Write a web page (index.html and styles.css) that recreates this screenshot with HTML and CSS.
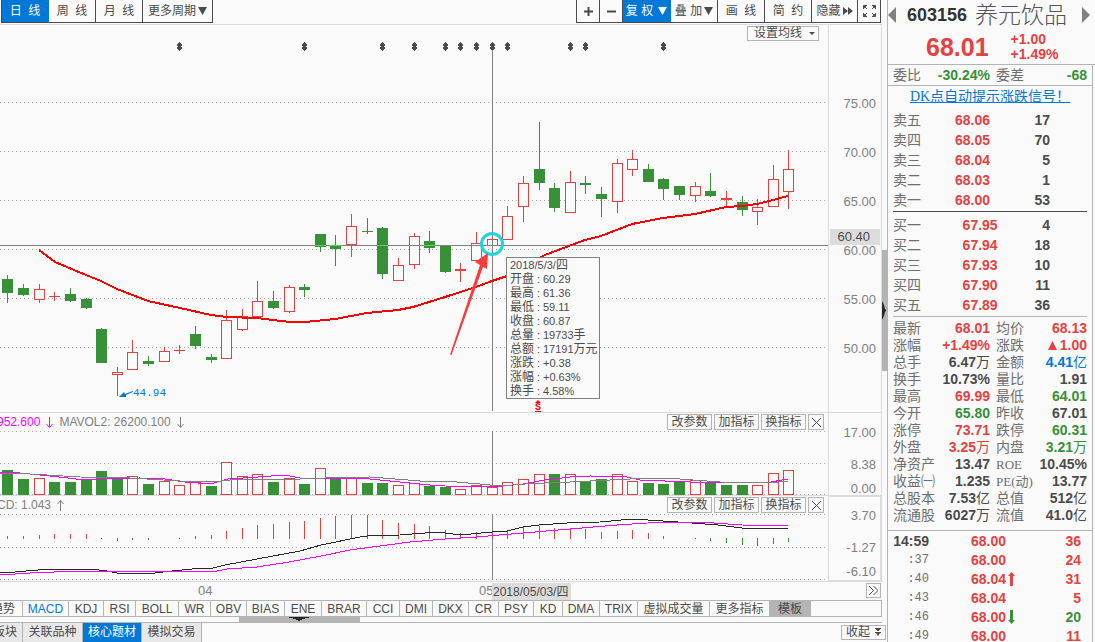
FILE: index.html
```html
<!DOCTYPE html>
<html lang="zh-CN">
<head>
<meta charset="utf-8">
<title>603156 养元饮品</title>
<link rel="stylesheet" href="styles.css">
</head>
<body>
<main class="main">
  <nav class="toolbar">
    <div class="group">
      <button class="tool on">日&nbsp;&nbsp;线</button>
      <button class="tool">周&nbsp;&nbsp;线</button>
      <button class="tool">月&nbsp;&nbsp;线</button>
      <button class="tool wide">更多周期<svg class="tri" width="9" height="8"><path d="M0 0h9l-4.500 8z"/></svg></button>
    </div>
    <div class="group">
      <button class="tool small" aria-label="放大"><svg width="9" height="9"><path d="M0 3.500h3.500V0h2v3.500H9v2H5.500V9h-2V5.500H0z"/></svg></button>
      <button class="tool small" aria-label="缩小"><svg width="9" height="9"><path d="M0 3.500h9v2H0z"/></svg></button>
      <button class="tool on adj">复&nbsp;权<svg class="tri gap" width="9" height="8"><path d="M0 0h9l-4.500 8z"/></svg></button>
      <button class="tool">叠&nbsp;加<svg class="tri" width="9" height="8"><path d="M0 0h9l-4.500 8z"/></svg></button>
      <button class="tool">画&nbsp;&nbsp;线</button>
      <button class="tool">简&nbsp;&nbsp;约</button>
      <button class="tool hide">隐藏<svg class="tri" width="10" height="8"><path d="M0 0l5 4-5 4zM5 0l5 4-5 4z"/></svg></button>
      <button class="tool small" aria-label="全屏"><svg width="13" height="12" fill="none" stroke="#4b4b4b"><path d="M.5 4V.5H4M1 1l3 3M9 .5h3.500V4M12 1L9 4M.5 8v3.500H4M1 11l3-3M9 11.500h3.500V8M12 11L9 8"/></svg></button>
    </div>
  </nav>

  <section class="panel price">
    <div class="plot">
      <header class="head right"><button class="avg">设置均线<svg width="6" height="3"><path d="M0 0h6L3 3z"/></svg></button></header>
      <svg class="canvas tall" shape-rendering="crispEdges">
        <defs><path id="mark" d="M2 0h1v1h1v1h1v2H4v1h1v2H4v1H3v1H2V8H1V7H0V5h1V4H0V2h1V1h1z"/></defs>
        <g transform="translate(0 -41)">
          <g class="grid">
            <line x1="0" x2="100%" y1="102.500" y2="102.500"/><line x1="0" x2="100%" y1="151.500" y2="151.500"/><line x1="0" x2="100%" y1="200.500" y2="200.500"/>
            <line x1="0" x2="100%" y1="249.500" y2="249.500"/><line x1="0" x2="100%" y1="298.500" y2="298.500"/><line x1="0" x2="100%" y1="347.500" y2="347.500"/>
          </g>
          <g class="ink">
            <use href="#mark" x="177" y="42"/><use href="#mark" x="302" y="42"/><use href="#mark" x="380" y="42"/><use href="#mark" x="412" y="42"/>
            <use href="#mark" x="443" y="42"/><use href="#mark" x="458" y="42"/><use href="#mark" x="474" y="42"/><use href="#mark" x="490" y="42"/>
            <use href="#mark" x="505" y="42"/><use href="#mark" x="568" y="42"/><use href="#mark" x="583" y="42"/><use href="#mark" x="661" y="42"/>
          </g>
          <path class="down" d="M7.500 275V303M23.500 284V296M70.500 288V302M86.500 298V309M101.500 328V363M148.500 356V366M195.500 326V349M211.500 354V363M273.500 291V309M304.500 284V297M320.500 234V252M335.500 235V266M367.500 218V234M382.500 227V279M429.500 231V253M445.500 246V273M539.500 122V190M554.500 183V212M585.500 176V194M601.500 187V217M648.500 164V182M663.500 178V200M679.500 186V200M710.500 173V197M742.500 196V216"/>
          <path class="down body" d="M7.500 279V293M23.500 288V295M70.500 294V301M86.500 299V308M101.500 329V363M148.500 361V364M195.500 334V346M211.500 357V360M273.500 301V308M304.500 287V290M320.500 234V247M335.500 245V249M367.500 231V232M382.500 228V274M429.500 241V248M445.500 246V272M539.500 169V183M554.500 188V208M585.500 183V185M601.500 194V199M648.500 169V182M663.500 179V189M679.500 186V195M710.500 191V196M742.500 202V210"/>
          <path class="up" d="M39.500 284V303M54.500 292V301M117.500 367V396M132.500 340V352M164.500 347V351M179.500 345V354M226.500 310V320M242.500 309V331M257.500 281V301M289.500 285V313M351.500 214V257M398.500 258V265M414.500 233V269M460.500 263V282M476.500 232V243M492.500 230V256M507.500 206V216M523.500 176V222M570.500 171V182M617.500 159V213M632.500 150V176M695.500 182V202M726.500 191V207M757.500 199V225M773.500 165V179M788.500 150V209M49 296.500h11M174 350.500h11M455 269.500h11M455 270.500h11M721 198.500h11M721 199.500h11"/>
          <path class="up hollow" d="M34.500 289.500h10v10h-10zM112.500 372.500h10v2h-10zM127.500 352.500h10v17h-10zM159.500 351.500h10v10h-10zM221.500 320.500h10v38h-10zM237.500 316.500h10v13h-10zM252.500 301.500h10v15h-10zM284.500 287.500h10v24h-10zM346.500 226.500h10v18h-10zM393.500 265.500h10v15h-10zM409.500 236.500h10v28h-10zM471.500 243.500h10v17h-10zM487.500 239.500h10v6h-10zM502.500 216.500h10v23h-10zM518.500 183.500h10v23h-10zM565.500 182.500h10v30h-10zM612.500 163.500h10v38h-10zM627.500 159.500h10v10h-10zM690.500 186.500h10v9h-10zM752.500 207.500h10v4h-10zM768.500 179.500h10v27h-10zM783.500 169.500h10v22h-10z"/>
          <line class="cross" x1="0" x2="100%" y1="245.500" y2="245.500"/><path class="cross" d="M492.500 50V411"/>
          <path class="glow" d="M315 245.500h11M330 245.500h11M377 245.500h11M424 245.500h11"/>
          <polyline class="ma" points="39,250 55,262 86,275 101,281 117,289 148,301 180,308 211,315 227,317 257,318 273,320 290,322 305,322 335,319 367,313 398,310 413,307 445,297 476,287 492,281 507,276 545,255 585,240 601,236 632,224 663,218 695,214 726,207 742,206 757,204 773,200 788,196"/>
          <g shape-rendering="auto">
            <circle cx="492" cy="244" r="10.500" class="ring"/>
            <path class="pointer" d="M450 354.500L480 265l-5-3L488 253l-1 16-4-2L451.500 355z"/>
            <path d="M119 397l5-5 1 2 8-3v1l-7 3v2z" fill="#0078d7"/>
            <text class="low" x="133" y="396">44.94</text>
            <path d="M535 403l3-3 3 3z" fill="red"/><text class="sell" x="535" y="410">S</text>
          </g>
        </g>
      </svg>
      <dl class="tip">
        <div class="day">2018/5/3/<b>四</b></div>
        <div><dt>开盘</dt><dd>60.29</dd></div>
        <div><dt>最高</dt><dd>61.36</dd></div>
        <div><dt>最低</dt><dd>59.11</dd></div>
        <div><dt>收盘</dt><dd>60.87</dd></div>
        <div><dt>总量</dt><dd>19733<b>手</b></dd></div>
        <div><dt>总额</dt><dd>17191<b>万元</b></dd></div>
        <div><dt>涨跌</dt><dd>+0.38</dd></div>
        <div><dt>涨幅</dt><dd>+0.63%</dd></div>
        <div><dt>换手</dt><dd>4.58%</dd></div>
      </dl>
    </div>
    <div class="axis"><span>75.00</span><span>70.00</span><span>65.00</span><span>60.00</span><span>55.00</span><span>50.00</span><em class="now">60.40</em></div>
  </section>

  <section class="panel">
    <div class="plot">
      <header class="head">
        <span class="legend pink">952.600<svg width="7" height="11"><path d="M3.500 0V10M.5 7l3 3.500 3-3.500"/></svg></span>
        <span class="legend next">MAVOL2: 26200.100<svg width="7" height="11"><path d="M3.500 0V10M.5 7l3 3.500 3-3.500"/></svg></span>
        <span class="acts"><button>改参数</button><button>加指标</button><button>换指标</button><button class="x" aria-label="关闭"><svg width="9" height="9"><path d="M0 0l9 9M9 0L0 9"/></svg></button></span>
      </header>
      <svg class="canvas vol" shape-rendering="crispEdges">
        <g transform="translate(0 -431)">
          <g class="grid"><line x1="0" x2="100%" y1="431.500" y2="431.500"/><line x1="0" x2="100%" y1="463.500" y2="463.500"/><line x1="0" x2="100%" y1="494.500" y2="494.500"/></g>
          <path class="cross" d="M492.500 431V495"/>
          <path class="down body" d="M7.500 470V495M23.500 479V495M54.500 482V495M70.500 482V495M86.500 480V495M101.500 471V495M117.500 479V495M148.500 484V495M211.500 486V495M273.500 482V495M304.500 484V495M335.500 479V495M367.500 483V495M382.500 483V495M429.500 486V495M445.500 487V495M554.500 474V495M585.500 481V495M601.500 479V495M648.500 483V495M663.500 484V495M679.500 482V495M710.500 483V495M726.500 485V495M742.500 485V495"/>
          <path class="up hollow" d="M34.500 494.500v-16h10v16zM127.500 494.500v-18h10v18zM159.500 494.500v-13h10v13zM174.500 494.500v-9h10v9zM190.500 494.500v-12h10v12zM221.500 494.500v-32h10v32zM237.500 494.500v-18h10v18zM252.500 494.500v-20h10v20zM284.500 494.500v-16h10v16zM315.500 494.500v-26h10v26zM346.500 494.500v-16h10v16zM393.500 494.500v-9h10v9zM409.500 494.500v-11h10v11zM455.500 494.500v-5h10v5zM471.500 494.500v-9h10v9zM487.500 494.500v-7h10v7zM502.500 494.500v-12h10v12zM518.500 494.500v-15h10v15zM534.500 494.500v-20h10v20zM565.500 494.500v-20h10v20zM612.500 494.500v-20h10v20zM627.500 494.500v-13h10v13zM690.500 494.500v-14h10v14zM752.500 494.500v-9h10v9zM768.500 494.500v-21h10v21zM783.500 494.500v-24h10v24z"/>
          <polyline class="line pinkline" points="0,472 20,473 50,476 85,480 105,479 140,478 165,479 185,482 210,484 228,479 258,477 285,475 305,479 317,478 360,478 380,480 400,482 430,485 445,486 492,487 523,484 545,480 570,477 590,476 627,477 640,480 690,482 765,483 788,479"/>
          <polyline class="line greyline" points="0,473 30,474 80,477 130,478 180,481 213,482 238,479 300,479 325,478 370,477 420,481 445,481 480,484 500,486 525,484 545,483 570,482 610,480 650,478 680,479 720,482 770,483 788,481"/>
        </g>
      </svg>
    </div>
    <div class="axis short"><span>17.00</span><span>8.38</span><span>0.00</span></div>
  </section>

  <section class="panel">
    <div class="plot">
      <header class="head">
        <span class="legend">CD: 1.043<svg width="7" height="11"><path d="M3.500 1V11M.5 4l3-3.500 3 3.500"/></svg></span>
        <span class="acts"><button>改参数</button><button>加指标</button><button>换指标</button><button class="x" aria-label="关闭"><svg width="9" height="9"><path d="M0 0l9 9M9 0L0 9"/></svg></button></span>
      </header>
      <svg class="canvas macd" shape-rendering="crispEdges">
        <g transform="translate(0 -514)">
          <g class="grid"><line x1="0" x2="100%" y1="514.500" y2="514.500"/><line x1="0" x2="100%" y1="547.500" y2="547.500"/><line x1="0" x2="100%" y1="579.500" y2="579.500"/></g>
          <path class="cross" d="M492.500 514V580"/>
          <path class="up" d="M7.500 536V539M23.500 536V539M39.500 535V539M54.500 534V539M70.500 534V539M86.500 534V539M101.500 538V539M179.500 538V539M195.500 536V539M211.500 535V539M226.500 531V539M242.500 528V539M257.500 525V539M273.500 524V539M289.500 522V539M304.500 521V539M320.500 518V539M335.500 516V539M351.500 515V539M367.500 515V539M382.500 520V539M398.500 523V539M414.500 524V539M429.500 526V539M445.500 530V539M460.500 533V539M476.500 532V539M492.500 531V539M507.500 531V539M523.500 527V539M539.500 526V539M554.500 528V539M570.500 529V539M585.500 529V539M601.500 532V539M617.500 531V539M632.500 530V539M648.500 533V539M663.500 536V539"/>
          <path class="down" d="M117.500 538V541M132.500 538V540M148.500 538V540M695.500 538V539M710.500 538V541M726.500 538V543M742.500 538V545M757.500 538V546M773.500 538V544M788.500 538V542"/>
          <polyline class="line black" points="0,573 15,572 38,570 63,569 90,569 107,571 117,573 155,573 172,571 192,569 213,568 225,565 257,559 300,551 321,545 360,537 367,536 400,535 425,533 433,532 445,533 460,535 492,532 507,531 523,527 539,525 567,523 600,522 632,519 663,521 692,523 718,525 742,528 788,528"/>
          <polyline class="line pinkline" points="0,575 15,574 30,573 78,571 109,571 185,571 217,571 227,569 257,567 289,562 321,556 350,550 380,546 410,542 445,539 476,537 523,533 570,529 617,525 663,522 700,522 742,525 788,526"/>
        </g>
      </svg>
    </div>
    <div class="axis short boxed"><span>3.70</span><span>-1.27</span><span>-6.10</span></div>
  </section>

  <div class="dates">
    <span class="month apr">04</span><span class="month may">05</span><span class="cursor">2018/05/03/<b>四</b></span>
    <button class="more" aria-label="更多"><svg width="9" height="9"><path d="M0 0l4.500 4.500L0 9M4.500 0L9 4.500 4.500 9"/></svg></button>
  </div>

  <nav class="tabs">
    <button class="cut">趋势</button><button class="sel">MACD</button><button>KDJ</button><button>RSI</button><button>BOLL</button><button>WR</button><button>OBV</button><button>BIAS</button><button>ENE</button><button>BRAR</button><button>CCI</button><button>DMI</button><button>DKX</button><button>CR</button><button>PSY</button><button>KD</button><button>DMA</button><button>TRIX</button><button>虚拟成交量</button><button>更多指标</button><button class="tpl">模板</button>
  </nav>
  <div class="strip"><div class="thumb"><svg width="20" height="4"><path d="M0 0h20v1h-4v1h-3v1h-2v1H9V3H7V2H4V1H0z"/></svg></div></div>
  <footer class="foot">
    <button class="cut">板块</button><button>关联品种</button><button class="sel">核心题材</button><button>模拟交易</button>
    <button class="fold">收起<svg width="6" height="8"><path d="M0 0h6v1H5v1H4v1H2V2H1V1H0zM0 4h6v1H5L3 8 1 5H0z"/></svg></button>
  </footer>
</main>

<div class="gutter"><div class="grip"><svg width="4" height="19"><path d="M0 0l1 2 1 2 1 4 1 1v1l-1 1-1 4-1 2-1 2z"/></svg></div></div>

<aside class="side">
  <header class="stock">
    <div class="title"><svg width="8" height="16"><path d="M8 0v16L0 8z"/></svg><strong>603156</strong><h1>养元饮品</h1><svg width="8" height="16"><path d="M0 0v16l8-8z"/></svg></div>
    <div class="quote"><strong>68.01</strong><div>+1.00<br>+1.49%</div></div>
  </header>
  <div class="book">
    <div class="pair ratio"><span>委比</span><b class="g">-30.24%</b><span>委差</span><b class="g">-68</b></div>
    <a class="dk" href="#">DK点自动提示涨跌信号！</a>
    <table class="orders sells">
      <tr><th>卖五</th><td class="r">68.06</td><td>17</td></tr>
      <tr><th>卖四</th><td class="r">68.05</td><td>70</td></tr>
      <tr><th>卖三</th><td class="r">68.04</td><td>5</td></tr>
      <tr><th>卖二</th><td class="r">68.03</td><td>1</td></tr>
      <tr><th>卖一</th><td class="r">68.00</td><td>53</td></tr>
    </table>
    <table class="orders buys">
      <tr><th>买一</th><td class="r">67.95</td><td>4</td></tr>
      <tr><th>买二</th><td class="r">67.94</td><td>18</td></tr>
      <tr><th>买三</th><td class="r">67.93</td><td>10</td></tr>
      <tr><th>买四</th><td class="r">67.90</td><td>11</td></tr>
      <tr><th>买五</th><td class="r">67.89</td><td>36</td></tr>
    </table>
    <div class="stats">
      <div class="pair"><span>最新</span><b class="r">68.01</b><span>均价</span><b class="r">68.13</b></div>
      <div class="pair"><span>涨幅</span><b class="r">+1.49%</b><span>涨跌</span><b class="r"><svg width="9" height="9"><path d="M4.500 0L9 9H0z"/></svg>1.00</b></div>
      <div class="pair"><span>总手</span><b>6.47<i>万</i></b><span>金额</span><b class="b">4.41<i>亿</i></b></div>
      <div class="pair"><span>换手</span><b>10.73%</b><span>量比</span><b>1.91</b></div>
      <div class="pair"><span>最高</span><b class="r">69.99</b><span>最低</span><b class="g">64.01</b></div>
      <div class="pair"><span>今开</span><b class="g">65.80</b><span>昨收</span><b>67.01</b></div>
      <div class="pair"><span>涨停</span><b class="r">73.71</b><span>跌停</span><b class="g">60.31</b></div>
      <div class="pair"><span>外盘</span><b class="r">3.25<i>万</i></b><span>内盘</span><b class="g">3.21<i>万</i></b></div>
      <div class="pair"><span>净资产</span><b>13.47</b><span class="lat">ROE</span><b>10.45%</b></div>
      <div class="pair"><span>收益㈠</span><b>1.235</b><span class="lat">PE(动)</span><b>13.77</b></div>
      <div class="pair"><span>总股本</span><b>7.53<i>亿</i></b><span>总值</span><b>512<i>亿</i></b></div>
      <div class="pair"><span>流通股</span><b>6027<i>万</i></b><span>流值</span><b>41.0<i>亿</i></b></div>
    </div>
    <table class="ticks">
      <tr><th class="full">14:59</th><td class="r">68.00</td><td></td><td class="r">36</td></tr>
      <tr><th>:37</th><td class="r">68.00</td><td></td><td class="r">24</td></tr>
      <tr><th>:40</th><td class="r">68.04</td><td class="r"><svg width="7" height="14"><path d="M3.500 0L7 4H5v10H2V4H0z"/></svg></td><td class="r">31</td></tr>
      <tr><th>:43</th><td class="r">68.04</td><td></td><td class="r">5</td></tr>
      <tr><th>:46</th><td class="r">68.00</td><td class="g"><svg width="7" height="14"><path d="M3.500 14L0 10h2V0h3v10h2z"/></svg></td><td class="g">20</td></tr>
      <tr><th>:49</th><td class="r">68.00</td><td></td><td class="r">11</td></tr>
    </table>
  </div>
</aside>
</body>
</html>
```
FILE: styles.css
```css
* { box-sizing: border-box; }
body {
  margin: 0;
  height: 100vh;
  display: flex;
  overflow: hidden;
  background: #fafafa;
  color: #4b4b4b;
  font: 12px/16px "Liberation Sans", "Noto Sans CJK SC", sans-serif;
}
svg { display: block; flex: none; fill: currentColor; }
button {
  margin: 0;
  padding: 0;
  border: 0;
  border-radius: 0;
  background: none;
  color: inherit;
  font: inherit;
  white-space: nowrap;
  display: flex;
  align-items: center;
  justify-content: center;
}
b, i, em { font-style: normal; }

.main { flex: 1; min-width: 0; display: flex; flex-direction: column; }

.toolbar { display: flex; justify-content: space-between; height: 25px; padding: 0 1px 1px; border-bottom: 1px solid #dcdcdc; }
.group { display: flex; height: 23px; border-bottom: 1px solid #4b4b4b; border-left: 1px solid #4b4b4b; }
.tool { width: 47px; border-right: 1px solid #4b4b4b; }
.tool.on { background: #0078d7; color: #fff; border-color: #0078d7; }
.tool.adj { width: 48px; }
.tool.wide { width: 70px; }
.tool.small { width: 23px; }
.tool.hide { width: 46px; }
.tool .tri { margin-left: 2px; }
.tool .tri.gap { margin-left: 5px; }

.panel { display: grid; grid-template-columns: 1fr 53px; border-bottom: 1px solid #dcdcdc; border-right: 1px solid #dcdcdc; }
.plot { position: relative; min-width: 0; }
.head { display: flex; align-items: center; height: 18px; padding-right: 4px; overflow: hidden; }
.price .head { height: 16px; padding-right: 9px; }
.head.right { justify-content: flex-end; }
.avg { width: 72px; height: 15px; border: 1px solid #b4b4b4; gap: 7px; line-height: 13px; padding-left: 3px; }
.legend { display: flex; align-items: center; gap: 6px; margin-left: -3px; color: #808080; white-space: pre; }
.legend.next { margin-left: 6px; }
.legend.pink { color: #f0f; }
.legend svg, .x svg, .more svg { fill: none; stroke: currentColor; }
.acts { display: flex; gap: 2px; margin-left: auto; }
.acts button { width: 45px; height: 16px; border: 1px solid #b4b4b4; line-height: 14px; }
.acts .x { width: 16px; }
.canvas { width: 100%; }
.tall { height: 371px; }
.vol { height: 64px; }
.macd { height: 67px; }

.grid { stroke: #a8a8a8; stroke-dasharray: 1 3; }
.down { stroke: #389038; fill: none; }
.up { stroke: #e64141; fill: none; }
.body { stroke-width: 11; }
.hollow { fill: #fafafa; }
.cross { stroke: #808080; }
.glow { stroke: #50dc50; }
.ma { fill: none; stroke: #f00; stroke-width: 2; }
.ring { fill: none; stroke: #19d7dc; stroke-width: 3; }
.pointer { fill: #fa3c3c; }
.low { fill: #0078d7; font: 11px "Liberation Mono", monospace; }
.sell { fill: #f00; font: bold 10px "Liberation Mono", monospace; text-decoration: underline; }
.line { fill: none; }
.pinkline { stroke: #f0f; }
.greyline { stroke: #808080; }
.black { stroke: #282828; }

.tip { position: absolute; left: 506px; top: 232px; width: 94px; margin: 0; padding: 0 0 0 3px; border: 1px solid #808080; background: #fafafa; font-size: 11px; line-height: 14px; white-space: nowrap; }
.tip div { display: flex; height: 14px; }
.tip dt { width: 24px; font-size: 12px; }
.tip dd { margin: 0; }
.tip dd::before { content: ":"; display: inline-block; width: 9px; text-align: center; }
.tip b { font-weight: normal; font-size: 12px; }

.axis { position: relative; display: flex; flex-direction: column; padding: 54px 5px 0 0; border-left: 1px solid #dcdcdc; color: #808080; font-size: 13px; text-align: right; }
.axis span { line-height: 49px; }
.now { position: absolute; left: 1px; right: 1px; top: 204px; height: 16px; padding-right: 10px; background: #dcdcdc; color: #4b4b4b; }
.short { padding-top: 12px; height: 82px; }
.short span { line-height: 16px; }
.short span + span { margin-top: 16px; }
.short span + span + span { margin-top: 8px; }
.boxed { height: 85px; outline: 1px solid #dcdcdc; outline-offset: -1px; }

.dates { position: relative; height: 18px; color: #808080; font-size: 13px; display: flex; justify-content: flex-end; }
.month { position: absolute; top: 1px; }
.apr { left: 198px; }
.may { left: 479px; }
.cursor { position: absolute; left: 492px; top: 1px; height: 17px; line-height: 18px; padding: 0 3px 0 1px; background: #dcdcdc; color: #4b4b4b; font-size: 12px; }
.cursor b { font-weight: normal; }
.more { width: 15px; height: 15px; margin: 1px 1px 0 0; border: 1px solid #b4b4b4; color: #4b4b4b; }

.tabs {
  display: grid;
  grid-template-columns: 23px 46px 35px 32px 43px 32px 36px 38px 37px 45px 33px 33px 36px 30px 35px 29px 37px 38px 72px 60px 41px;
  height: 17px;
  border: solid #b4b4b4;
  border-width: 1px 1px 1px 0;
}
.tabs button { border-right: 1px solid #b4b4b4; }
.tabs .cut { padding-right: 7px; justify-content: flex-end; overflow: hidden; }
.tabs .sel { color: #0078d7; }
.tabs .tpl { background: #b4b4b4; }
.strip { height: 6px; padding-left: 239px; border-bottom: 1px solid #b4b4b4; }
.thumb { width: 121px; height: 5px; background: #b4b4b4; color: #282828; padding-left: 50px; }
.foot { display: flex; height: 20px; }
.foot button { width: 60px; border-right: 1px solid #b4b4b4; background: #e8e8e8; }
.foot .cut { width: 23px; padding-right: 5px; justify-content: flex-end; overflow: hidden; }
.foot .sel { width: 59px; background: #0078d7; color: #fff; }
.foot .fold { width: 45px; height: 15px; margin: 2px -4px 0 auto; border: 1px solid #b4b4b4; background: none; gap: 5px; }

.gutter { width: 5px; padding-top: 250px; }
.grip { height: 121px; padding-top: 51px; background: #b4b4b4; color: #282828; }

.side { width: 208px; border-left: 1px solid #b4b4b4; }
.stock { height: 65px; border-bottom: 1px solid #b4b4b4; }
.title { display: flex; align-items: center; height: 30px; color: #808080; padding-right: 5px; }
.title strong { margin-left: 11px; color: #333; font-size: 18px; }
.title h1 { flex: 1; margin: 0 0 0 8px; color: #555; font-size: 23px; line-height: 28px; font-weight: 300; }
.quote { display: flex; align-items: center; padding: 2px 0 0 38px; gap: 22px; color: #e64141; font-weight: bold; font-size: 14px; line-height: 15px; }
.quote strong { font-size: 25px; line-height: 30px; }
.book { width: 205px; height: 600px; border-right: 1px solid #b4b4b4; font-size: 14px; color: #4b4b4b; }
.pair { display: grid; grid-template-columns: 44px 53px 48px 1fr; column-gap: 0; padding: 0 5px; height: 17px; line-height: 17px; white-space: nowrap; }
.pair span { color: #6e6e6e; }
.pair b { display: flex; justify-content: flex-end; align-items: center; gap: 3px; }
.pair span:nth-child(3) { padding-left: 6px; }
.pair i { font-weight: normal; margin-left: -3px; }
.pair .lat { font-family: "Liberation Serif", "Noto Sans CJK SC", serif; font-size: 13px; }
.ratio { height: 21px; line-height: 20px; border-bottom: 1px solid #b4b4b4; }
.r, .pair .r { color: #e64141; }
.g, .pair .g { color: #389038; }
.b, .pair .b { color: #0078d7; }
.dk { display: block; height: 24px; line-height: 21px; text-align: center; color: #0078d7; font-family: "Liberation Serif", "Noto Sans CJK SC", serif; }
table { border-collapse: collapse; table-layout: fixed; font-weight: bold; }
th, td { padding: 0; text-align: right; }
th { text-align: left; font-weight: normal; color: #6e6e6e; }
.orders { width: 157px; margin-left: 5px; }
.orders tr { height: 20px; line-height: 19px; }
.orders th { width: 44px; }
.orders td:nth-child(2) { width: 53px; }
.orders td:nth-child(3) { width: 60px; }
.sells { margin-bottom: 1px; }
.buys::before { content: ""; display: block; width: 194px; height: 1px; margin-bottom: 3px; background: #4b4b4b; }
.stats { padding: 4px 0 6px; border-bottom: 1px solid #b4b4b4; }
.stats::before { content: ""; display: block; height: 1px; margin: -3px 5px 3px; background: #b4b4b4; }
.ticks { width: 188px; margin-left: 5px; }
.ticks tr { height: 19px; line-height: 18px; }
.ticks th { width: 36px; text-align: right; font: 12px/18px "Liberation Mono", monospace; }
.ticks .full { color: #4b4b4b; font: bold 14px/18px "Liberation Sans", sans-serif; }
.ticks td:nth-child(2) { width: 77px; }
.ticks td:nth-child(3) { width: 10px; padding-left: 2px; }
.ticks td:nth-child(4) { width: 65px; }
```
